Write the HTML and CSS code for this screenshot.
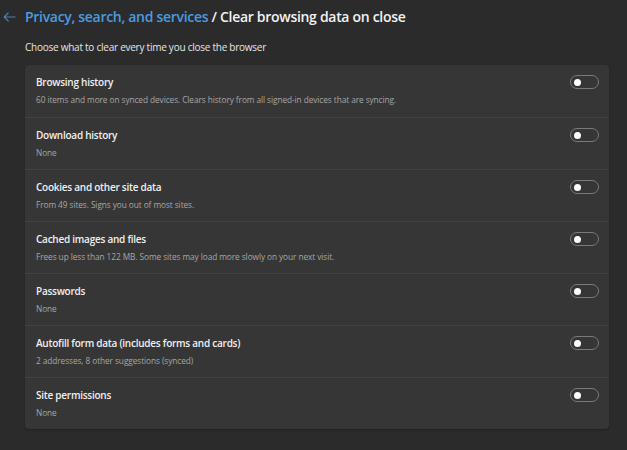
FILE: index.html
```html
<!DOCTYPE html>
<html lang="en">
<head>
<meta charset="utf-8">
<title>Clear browsing data on close</title>
<link rel="stylesheet" href="styles.css">
</head>
<body>
<div class="page">
  <header class="header">
    <button class="back" aria-label="Back">
      <svg width="13" height="10" viewBox="0 0 13 10" fill="none" stroke="currentColor" stroke-width="1.1" stroke-linecap="round" stroke-linejoin="round"><path d="M12.2 5H1.2M5.2 1L1.2 5l4 4"/></svg>
    </button>
    <h1 class="title"><span class="crumb">Privacy, search, and services</span> / Clear browsing data on close</h1>
  </header>
  <p class="intro">Choose what to clear every time you close the browser</p>
  <div class="card">
    <div class="row">
      <div class="text"><div class="label">Browsing history</div><div class="desc">60 items and more on synced devices. Clears history from all signed-in devices that are syncing.</div></div>
      <span class="toggle"><span class="knob"></span></span>
    </div>
    <div class="row">
      <div class="text"><div class="label">Download history</div><div class="desc">None</div></div>
      <span class="toggle"><span class="knob"></span></span>
    </div>
    <div class="row">
      <div class="text"><div class="label">Cookies and other site data</div><div class="desc">From 49 sites. Signs you out of most sites.</div></div>
      <span class="toggle"><span class="knob"></span></span>
    </div>
    <div class="row">
      <div class="text"><div class="label">Cached images and files</div><div class="desc">Frees up less than 122 MB. Some sites may load more slowly on your next visit.</div></div>
      <span class="toggle"><span class="knob"></span></span>
    </div>
    <div class="row">
      <div class="text"><div class="label">Passwords</div><div class="desc">None</div></div>
      <span class="toggle"><span class="knob"></span></span>
    </div>
    <div class="row">
      <div class="text"><div class="label">Autofill form data (includes forms and cards)</div><div class="desc">2 addresses, 8 other suggestions (synced)</div></div>
      <span class="toggle"><span class="knob"></span></span>
    </div>
    <div class="row">
      <div class="text"><div class="label">Site permissions</div><div class="desc">None</div></div>
      <span class="toggle"><span class="knob"></span></span>
    </div>
  </div>
</div>
</body>
</html>
```

FILE: styles.css
```css
* { box-sizing: border-box; }
html, body { margin: 0; padding: 0; }
body {
  background: #2b2b2b;
  color: #ffffff;
  font-family: "Open Sans", "Noto Sans", sans-serif;
  width: 627px;
  height: 450px;
  overflow: hidden;
}
.page { padding: 6px 18px 0 25px; }
.header {
  display: flex;
  align-items: center;
  height: 22px;
  margin-left: -25px;
}
.back {
  width: 25px;
  height: 22px;
  padding: 0 0 0 3px;
  border: 0;
  background: transparent;
  color: #4d80b0;
  display: flex;
  align-items: center;
}
.title {
  margin: 0;
  font-size: 14px;
  letter-spacing: -0.3px;
  font-weight: 600;
  line-height: 22px;
  color: #f2f2f2;
  white-space: nowrap;
}
.crumb { color: #4a9be0; }
.intro {
  margin: 12px 0 0;
  font-size: 10px;
  letter-spacing: -0.25px;
  line-height: 14px;
  color: #e6e6e6;
}
.card {
  margin-top: 11px;
  width: 584px;
  background: #363636;
  border-radius: 4px;
  box-shadow: 0 1px 2px rgba(0,0,0,0.25);
}
.row {
  display: flex;
  justify-content: space-between;
  height: 52px;
  padding: 10px 10px 0 11px;
  border-top: 1px solid #424242;
}
.row:first-child { border-top: 0; }
.label {
  font-size: 10px;
  letter-spacing: -0.25px;
  font-weight: 600;
  line-height: 14px;
  color: #f0f0f0;
}
.desc {
  margin-top: 5px;
  font-size: 8.3px;
  letter-spacing: -0.08px;
  line-height: 12px;
  color: #a6a6a6;
}
.toggle {
  flex: none;
  width: 29px;
  height: 14px;
  border: 1px solid #7a7a7a;
  border-radius: 7px;
  display: flex;
  align-items: center;
  padding-left: 3px;
}
.knob {
  width: 7px;
  height: 7px;
  border-radius: 50%;
  background: #ffffff;
}
```
